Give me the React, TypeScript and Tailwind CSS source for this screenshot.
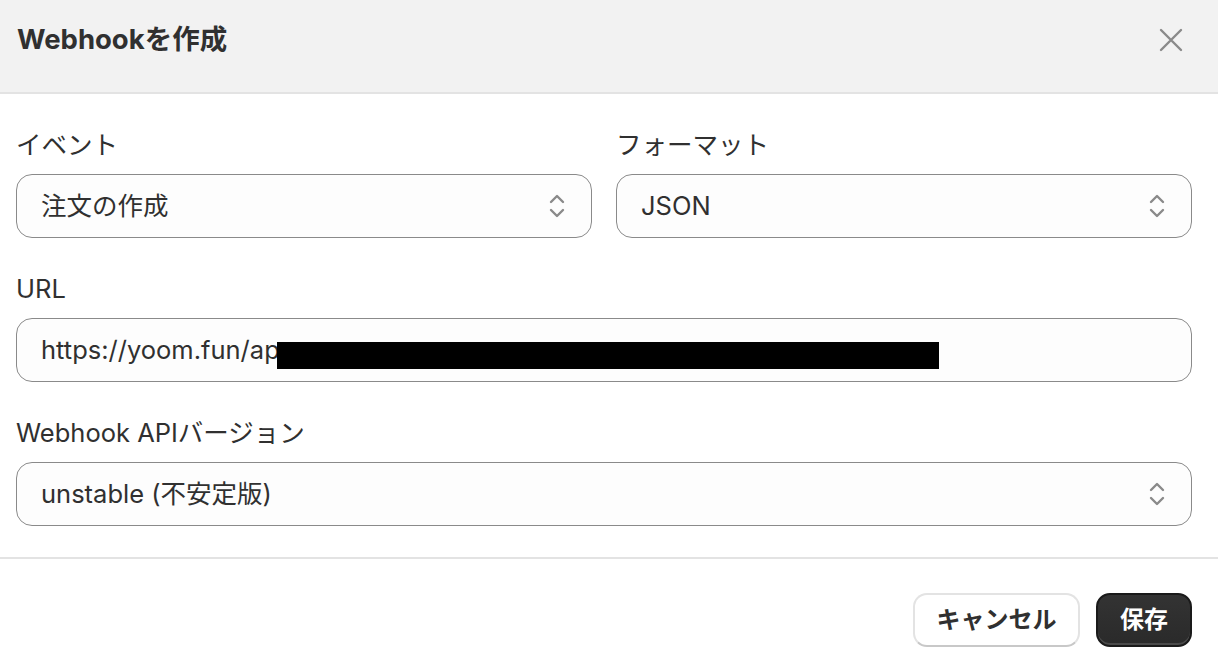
const font = {
  fontFamily:
    'Inter, "Noto Sans CJK JP", "Noto Sans", sans-serif',
};

function Chevrons() {
  return (
    <svg width="20" height="28" viewBox="0 0 20 28" fill="none" stroke="#8a8a8a" strokeWidth="2.4" strokeLinecap="round" strokeLinejoin="round">
      <path d="M4 10 L10 4 L16 10" />
      <path d="M4 18 L10 24 L16 18" />
    </svg>
  );
}

function SelectBox({ value }: { value: string }) {
  return (
    <div className="flex h-16 items-center justify-between rounded-2xl border border-[#8a8a8a] bg-[#fdfdfd] pl-6 pr-6">
      <span className="text-[25.5px] text-[#303030]">{value}</span>
      <Chevrons />
    </div>
  );
}

function Label({ children }: { children: string }) {
  return <label className="text-[25.5px] leading-[30px] text-[#303030]">{children}</label>;
}

export default function App() {
  return (
    <div className="h-[668px] w-[1218px] overflow-hidden bg-white" style={font}>
      <div className="flex h-[94px] items-center justify-between border-b-2 border-[#e3e3e3] bg-[#f2f2f2] pb-[12px] pl-[17px] pr-[34px]">
        <h1 className="text-[27.5px] font-bold text-[#303030]">Webhookを作成</h1>
        <svg width="26" height="26" viewBox="0 0 26 26" stroke="#8a8a8a" strokeWidth="2.4" strokeLinecap="round">
          <path d="M3 3 L23 23 M23 3 L3 23" />
        </svg>
      </div>

      <div className="flex flex-col gap-[36px] pl-4 pr-[26px] pt-[36px]">
        <div className="grid grid-cols-2 gap-6">
          <div className="flex flex-col gap-[14px]">
            <Label>イベント</Label>
            <SelectBox value="注文の作成" />
          </div>
          <div className="flex flex-col gap-[14px]">
            <Label>フォーマット</Label>
            <SelectBox value="JSON" />
          </div>
        </div>

        <div className="flex flex-col gap-[14px]">
          <Label>URL</Label>
          <div className="relative flex h-16 items-center rounded-2xl border border-[#8a8a8a] bg-[#fdfdfd] pl-6">
            <span className="text-[25.5px] text-[#303030]">https://yoom.fun/ap</span>
            <div className="absolute left-[260px] top-[23px] h-[27px] w-[662px] bg-black" />
          </div>
        </div>

        <div className="flex flex-col gap-[14px]">
          <Label>Webhook APIバージョン</Label>
          <SelectBox value="unstable (不安定版)" />
        </div>
      </div>

      <div className="mt-[31px] border-t-2 border-[#e3e3e3]" />

      <div className="flex justify-end gap-4 pr-[26px] pt-[34px]">
        <button className="h-[54px] w-[167px] rounded-[14px] border-2 border-[#e3e3e3] border-b-[#c8c8c8] bg-white text-[24px] font-bold text-[#303030]">
          キャンセル
        </button>
        <button className="h-[54px] w-[96px] rounded-[14px] border-2 border-[#1a1a1a] bg-gradient-to-b from-[#333333] to-[#2a2a2a] text-[24px] font-bold text-white shadow-[inset_0_-2px_0_#4a4a4a]">
          保存
        </button>
      </div>
    </div>
  );
}
